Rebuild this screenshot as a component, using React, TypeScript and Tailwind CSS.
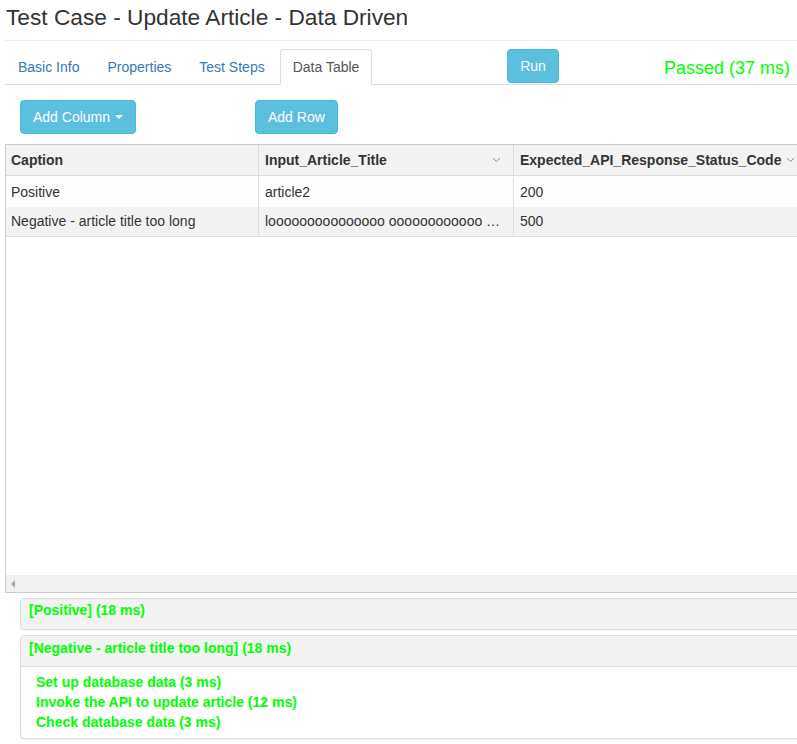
import React from 'react';

const tabs = ['Basic Info', 'Properties', 'Test Steps', 'Data Table'];

const rows = [
  { caption: 'Positive', title: 'article2', code: '200' },
  { caption: 'Negative - article title too long', title: 'looooooooooooooo oooooooooooo …', code: '500' },
];

const results = [
  { name: '[Positive] (18 ms)', steps: [] as string[] },
  {
    name: '[Negative - article title too long] (18 ms)',
    steps: ['Set up database data (3 ms)', 'Invoke the API to update article (12 ms)', 'Check database data (3 ms)'],
  },
];

function Chevron() {
  return (
    <svg width="9" height="6" viewBox="0 0 9 6" className="flex-none">
      <path d="M1 1l3.5 3.5L8 1" fill="none" stroke="#8a8a8a" strokeWidth="1" />
    </svg>
  );
}

export default function App() {
  return (
    <div className="w-[797px] h-[744px] overflow-hidden bg-white text-[#333] font-['Liberation_Sans',Arial,sans-serif]">
      {/* Title */}
      <h3 className="pl-[6px] pt-[4px] text-[22.7px] leading-[26px] whitespace-nowrap">
        Test Case - Update Article - Data Driven
      </h3>
      <div className="ml-[5px] mt-[10px] border-t border-[#eee]" />

      {/* Tabs row */}
      <div className="ml-[5px] mt-[8px] w-[900px] h-[36px] flex items-start border-b border-[#ddd]">
        <ul className="w-[502px] flex">
          {tabs.map((t) => {
            const active = t === 'Data Table';
            return (
              <li key={t} className="mr-[2px]">
                <span
                  className={
                    active
                      ? 'block h-[36px] px-[12px] leading-[34px] text-[14px] text-[#555] bg-white border border-[#ddd] border-b-transparent rounded-t-[4px]'
                      : 'block h-[36px] px-[12px] leading-[34px] text-[14px] text-[#337ab7] border border-transparent rounded-t-[4px]'
                  }
                >
                  {t}
                </span>
              </li>
            );
          })}
        </ul>
        <button className="w-[52px] h-[34px] rounded-[4px] bg-[#5bc0de] border border-[#46b8da] text-white text-[14px]">
          Run
        </button>
        <div className="w-[231px] pt-[7px] text-right text-[18px] leading-[24px] text-[#00ff00]">Passed (37 ms)</div>
      </div>

      {/* Action buttons */}
      <div className="mt-[15px] flex">
        <div className="ml-[20px] w-[235px]">
          <button className="h-[34px] px-[12px] rounded-[4px] bg-[#5bc0de] border border-[#46b8da] text-white text-[14px] flex items-center gap-[5px]">
            Add Column
            <span className="w-0 h-0 border-l-[4px] border-r-[4px] border-t-[4px] border-l-transparent border-r-transparent border-t-white" />
          </button>
        </div>
        <button className="h-[34px] px-[12px] rounded-[4px] bg-[#5bc0de] border border-[#46b8da] text-white text-[14px]">
          Add Row
        </button>
      </div>

      {/* Data table */}
      <div className="ml-[5px] mt-[10px] w-[1000px] h-[449px] border border-[#ccc] flex flex-col">
        <div className="flex h-[31px] bg-[#f3f3f3] border-b border-[#ddd] text-[14px] font-bold">
          <div className="w-[253px] px-[5px] flex items-center border-r border-[#ddd]">Caption</div>
          <div className="w-[255px] px-[6px] flex items-center justify-between border-r border-[#ddd]">
            <span>Input_Article_Title</span>
            <span className="pr-[6px]"><Chevron /></span>
          </div>
          <div className="w-[292px] px-[6px] flex items-center justify-between border-r border-[#ddd]">
            <span>Expected_API_Response_Status_Code</span>
            <span className="pr-[4px]"><Chevron /></span>
          </div>
        </div>
        {rows.map((r, i) => (
          <div
            key={r.caption}
            className={
              i === 0
                ? 'flex h-[31px] pt-[1px] bg-[#fdfdfd] text-[14px]'
                : 'flex h-[30px] bg-[#f3f3f3] text-[14px] border-b border-[#ddd]'
            }
          >
            <div className="w-[253px] px-[5px] flex items-center border-r border-[#ddd] whitespace-nowrap">{r.caption}</div>
            <div className="w-[255px] px-[6px] flex items-center border-r border-[#ddd] whitespace-nowrap overflow-hidden">
              {r.title}
            </div>
            <div className="w-[292px] px-[6px] flex items-center">{r.code}</div>
          </div>
        ))}
        <div className="flex-1" />
        <div className="h-[17px] bg-[#f0f0f0] flex items-center pl-[5px]">
          <span className="w-0 h-0 border-t-[4px] border-b-[4px] border-r-[4px] border-t-transparent border-b-transparent border-r-[#a3a3a3]" />
        </div>
      </div>

      {/* Results */}
      <div className="ml-[20px] mt-[5px] w-[1000px] flex flex-col gap-[5px]">
        {results.map((res) => (
          <div key={res.name} className="border border-[#ddd] rounded-[4px] bg-white shadow-[0_1px_1px_rgba(0,0,0,0.05)]">
            <div
              className={
                res.steps.length
                  ? 'h-[31px] px-[8px] pt-[2px] leading-[20px] bg-[#f3f3f3] border-b border-[#ddd] rounded-t-[3px] text-[14px] font-bold text-[#00ff00]'
                  : 'h-[30px] px-[8px] pt-[1px] leading-[20px] bg-[#f3f3f3] rounded-[3px] text-[14px] font-bold text-[#00ff00]'
              }
            >
              {res.name}
            </div>
            {res.steps.length > 0 && (
              <div className="pl-[15px] pt-[5px] pb-[6px] text-[14px] leading-[20px] font-bold text-[#00ff00]">
                {res.steps.map((s) => (
                  <div key={s}>{s}</div>
                ))}
              </div>
            )}
          </div>
        ))}
      </div>
    </div>
  );
}
